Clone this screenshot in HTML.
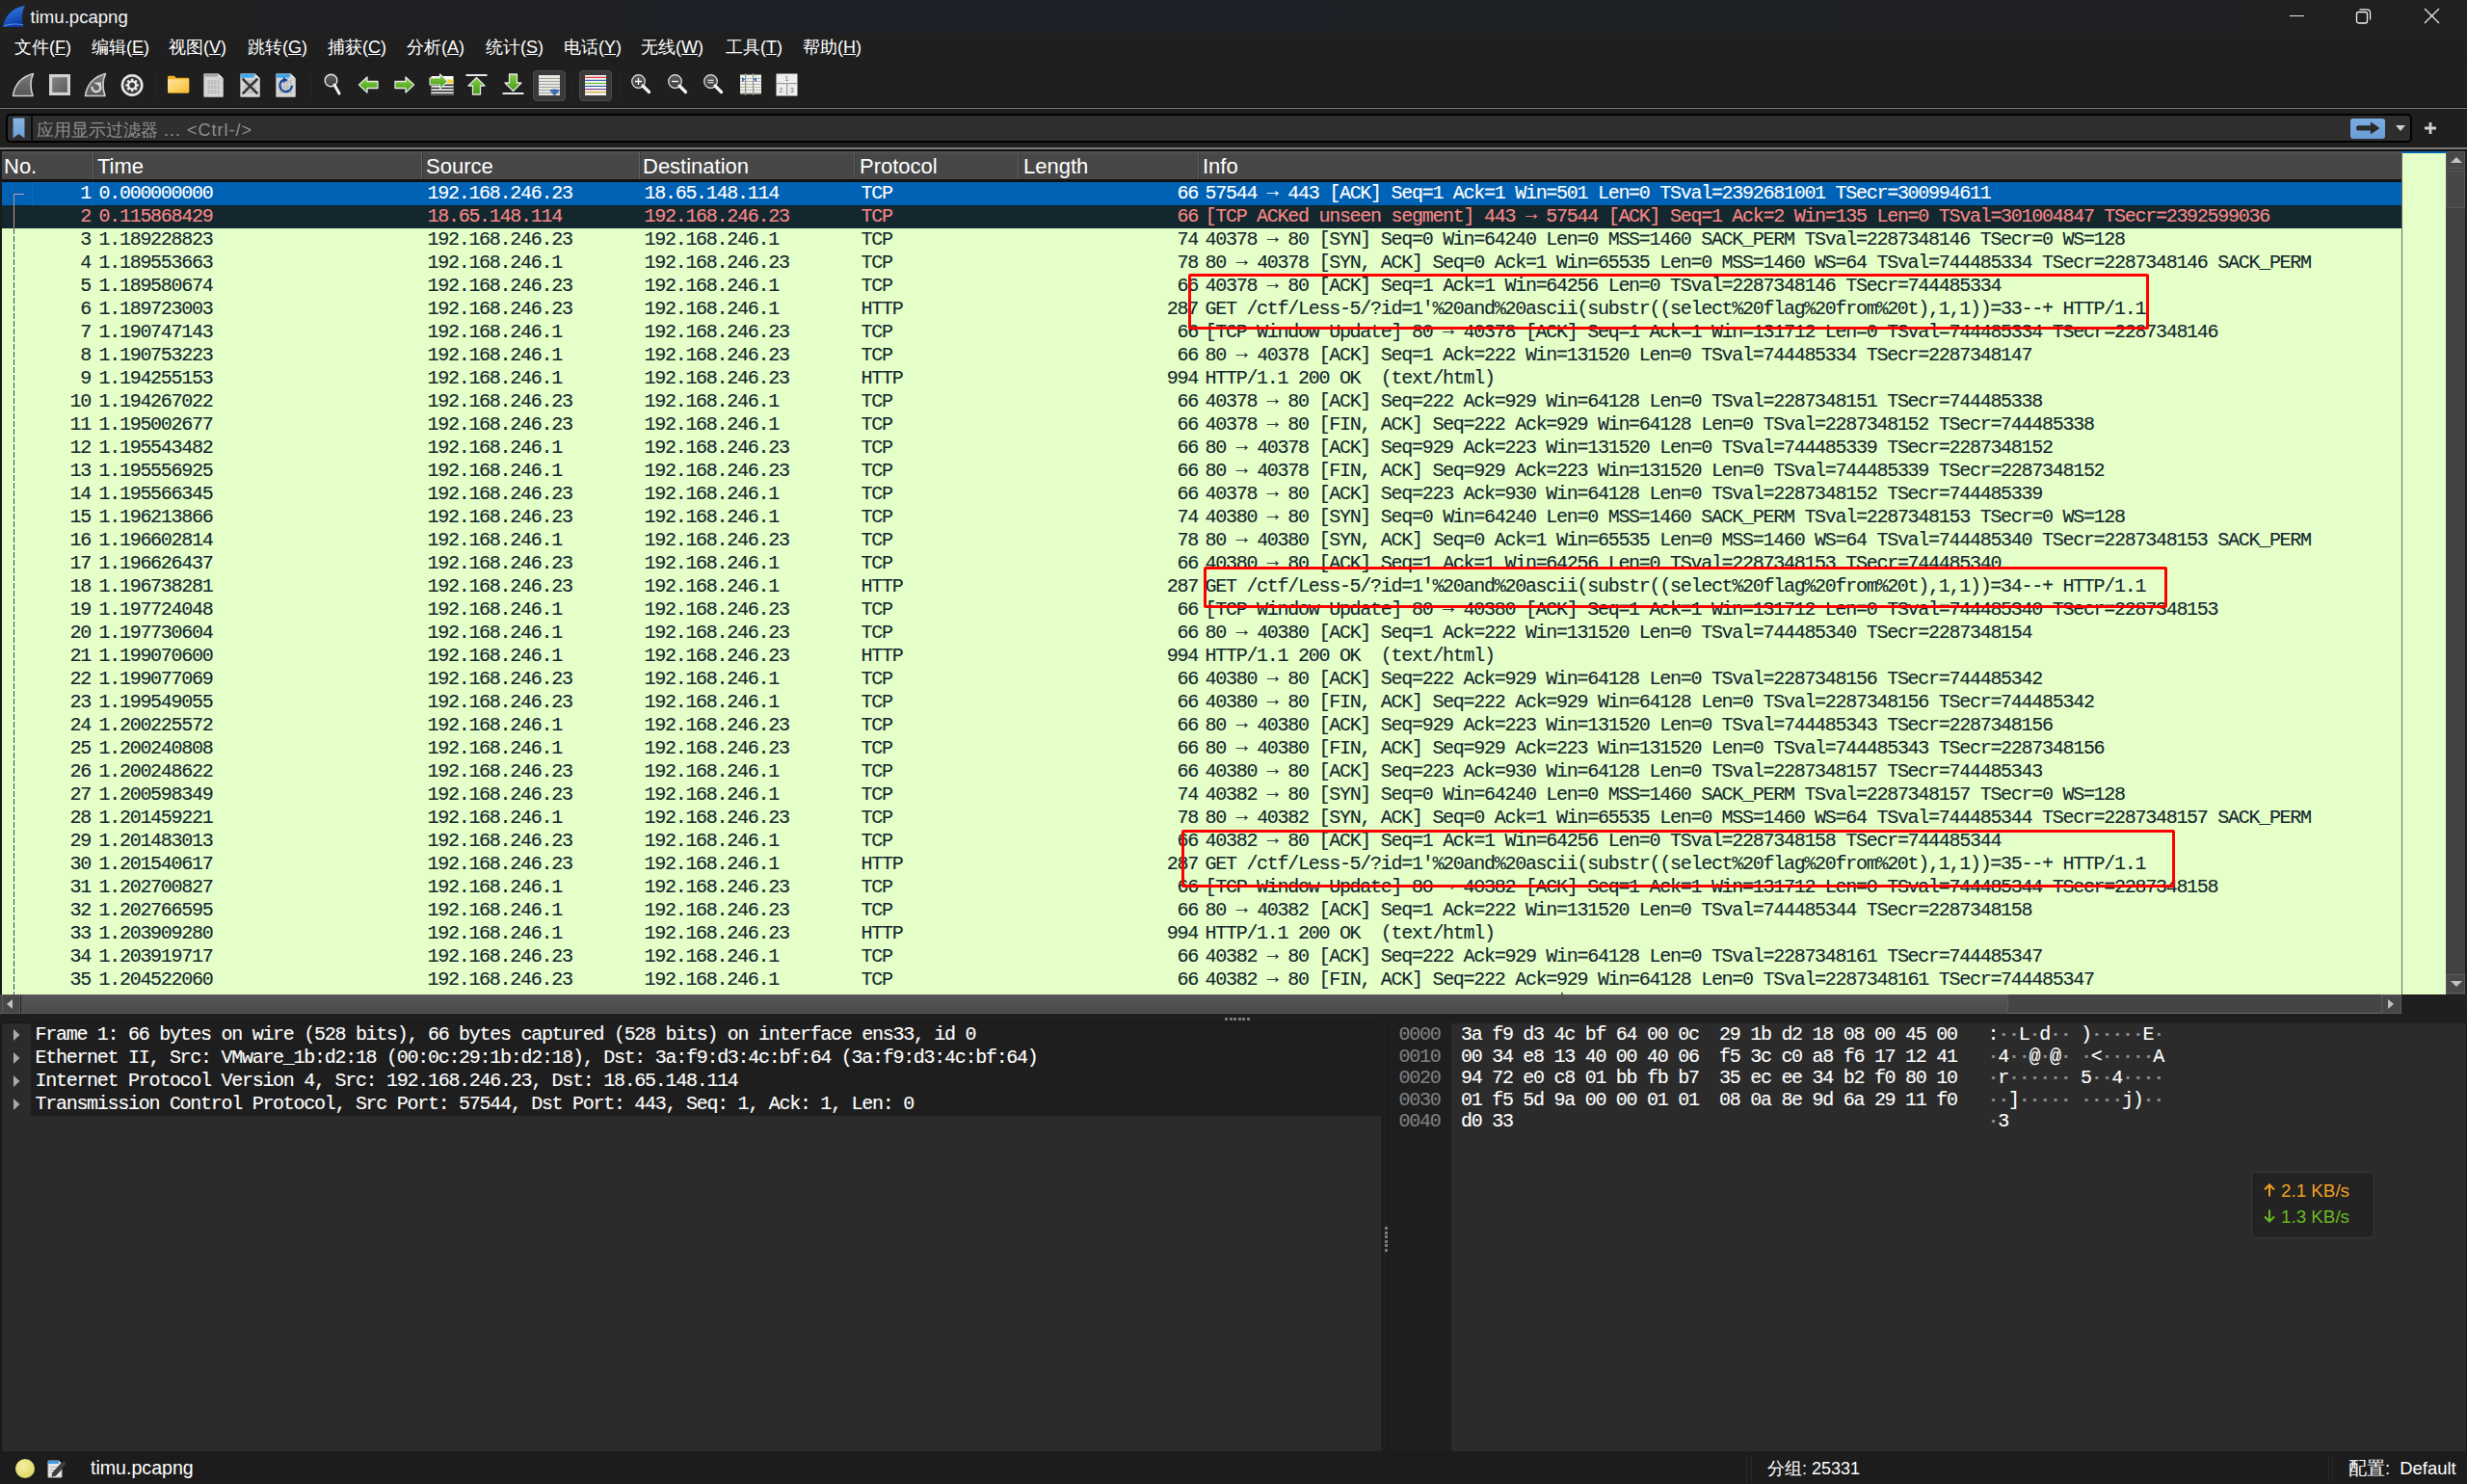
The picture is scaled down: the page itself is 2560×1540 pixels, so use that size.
<!DOCTYPE html><html><head><meta charset="utf-8"><style>
*{box-sizing:border-box;margin:0;padding:0}
html,body{width:2560px;height:1540px;overflow:hidden;background:#1f1f1f}
body{position:relative;font-family:"Liberation Sans",sans-serif;color:#fff}
.a{position:absolute}
.m{font-family:"Liberation Mono",monospace;font-size:20px;letter-spacing:-1.28px;-webkit-text-stroke:0.12px currentColor;white-space:pre;line-height:24px}
.s{font-family:"Liberation Sans",sans-serif;white-space:pre}
.row{position:absolute;left:2px;width:2490px;height:24px}
.row .m{position:absolute;top:0}
.hdr{position:absolute;top:157px;height:29px;background:linear-gradient(#525252,#474747 15%,#474747);}
.hs{position:absolute;top:157px;width:2px;height:29px;background:linear-gradient(90deg,#606060 50%,#3c3c3c 50%)}
.ht{position:absolute;top:160.5px;font-size:22px;line-height:24px;color:#fff}
.rb{position:absolute;border:3px solid #ff0000;border-radius:2px}
</style></head><body>
<div class="a" style="left:0;top:0;width:2560px;height:34px;background:linear-gradient(90deg,#212122 0%,#1f2023 15%,#1d2028 35%,#1e2126 55%,#1f2124 75%,#202022 100%)"></div>
<svg class="a" style="left:2px;top:5px" width="26" height="24" viewBox="0 0 26 24">
<defs><linearGradient id="sg" x1="0" y1="0" x2="0.4" y2="1"><stop offset="0" stop-color="#3a8af0"/><stop offset="1" stop-color="#0a3aa8"/></linearGradient></defs>
<path d="M1 23 C3 12 10 3 24 1 C21 6 20 14 22 23 Z" fill="url(#sg)"/>
<path d="M2 22 C8 19.5 16 19.5 22 21" stroke="#8fb8f0" stroke-width="1" fill="none" opacity=".7"/>
</svg>
<div class="a s" style="left:31.5px;top:6px;font-size:18.6px;line-height:24px;color:#f4f4f4">timu.pcapng</div>
<div class="a" style="left:2376px;top:16px;width:15px;height:1px;background:#e8e8e8"></div>
<svg class="a" style="left:2444px;top:8px" width="18" height="18" viewBox="0 0 18 18"><rect x="1.5" y="4.5" width="11" height="11.5" rx="2" fill="none" stroke="#f0f0f0" stroke-width="1.3"/><path d="M4.5 1.8 H12.5 a3 3 0 0 1 3 3 V12.5" fill="none" stroke="#f0f0f0" stroke-width="1.3"/></svg>
<svg class="a" style="left:2515px;top:8px" width="17" height="17" viewBox="0 0 17 17"><path d="M1 1 L16 16 M16 1 L1 16" stroke="#e8e8e8" stroke-width="1.3"/></svg>
<div class="a s" style="left:15px;top:36px;font-size:18px;line-height:26px;color:#fff">文件(<u>F</u>)</div>
<div class="a s" style="left:95px;top:36px;font-size:18px;line-height:26px;color:#fff">编辑(<u>E</u>)</div>
<div class="a s" style="left:175px;top:36px;font-size:18px;line-height:26px;color:#fff">视图(<u>V</u>)</div>
<div class="a s" style="left:257px;top:36px;font-size:18px;line-height:26px;color:#fff">跳转(<u>G</u>)</div>
<div class="a s" style="left:340px;top:36px;font-size:18px;line-height:26px;color:#fff">捕获(<u>C</u>)</div>
<div class="a s" style="left:422px;top:36px;font-size:18px;line-height:26px;color:#fff">分析(<u>A</u>)</div>
<div class="a s" style="left:504px;top:36px;font-size:18px;line-height:26px;color:#fff">统计(<u>S</u>)</div>
<div class="a s" style="left:585px;top:36px;font-size:18px;line-height:26px;color:#fff">电话(<u>Y</u>)</div>
<div class="a s" style="left:665px;top:36px;font-size:18px;line-height:26px;color:#fff">无线(<u>W</u>)</div>
<div class="a s" style="left:753px;top:36px;font-size:18px;line-height:26px;color:#fff">工具(<u>T</u>)</div>
<div class="a s" style="left:833px;top:36px;font-size:18px;line-height:26px;color:#fff">帮助(<u>H</u>)</div>
<div class="a" style="left:0;top:63px;width:2560px;height:1px;background:#1b1b1b"></div>
<svg width="0" height="0" style="position:absolute"><defs>
<linearGradient id="gfin" x1="0" y1="0" x2="0" y2="1"><stop offset="0" stop-color="#7a7a7a"/><stop offset="1" stop-color="#555"/></linearGradient>
<linearGradient id="gsq" x1="0" y1="0" x2="1" y2="1"><stop offset="0" stop-color="#5a5a5a"/><stop offset="1" stop-color="#707070"/></linearGradient>
<linearGradient id="ggr" x1="0" y1="0" x2="0" y2="1"><stop offset="0" stop-color="#8ad04a"/><stop offset="1" stop-color="#3e9a10"/></linearGradient>
<linearGradient id="gfold" x1="0" y1="0" x2="0" y2="1"><stop offset="0" stop-color="#ffe08a"/><stop offset="1" stop-color="#f8c440"/></linearGradient>
<linearGradient id="gmag" x1="0" y1="0" x2="0" y2="1"><stop offset="0" stop-color="#606060"/><stop offset="1" stop-color="#3a3a3a"/></linearGradient>
</defs></svg>
<svg class="a" style="left:12px;top:75px" width="24" height="26" viewBox="0 0 24 26"><path d="M1.5 24.5 C3 14 9 5 22.5 1.5 C19.5 8 19 16 22 24.5 Z" fill="url(#gfin)" stroke="#cfcfcf" stroke-width="1.6" stroke-linejoin="round"/></svg>
<svg class="a" style="left:51px;top:77px" width="22" height="22" viewBox="0 0 22 22"><defs><linearGradient id="gst" x1="0" y1="0" x2="1" y2="1"><stop offset="0" stop-color="#8a8a8a"/><stop offset="1" stop-color="#555"/></linearGradient></defs><rect x="1.6" y="1.6" width="18.8" height="18.8" fill="url(#gst)" stroke="#d2d2d2" stroke-width="3.2"/></svg>
<svg class="a" style="left:87px;top:75px" width="24" height="26" viewBox="0 0 24 26"><path d="M1.5 24.5 C3 14 9 5 22.5 1.5 C19.5 8 19 16 22 24.5 Z" fill="url(#gfin)" stroke="#cfcfcf" stroke-width="1.6" stroke-linejoin="round"/><path d="M8.6 14.8 A4.4 4.4 0 1 0 16.6 13.5 V10.8" fill="none" stroke="#d8d8d8" stroke-width="2.3"/><path d="M10 10.5 H18 V15.5Z" fill="#d8d8d8"/></svg>
<svg class="a" style="left:125px;top:76px" width="25" height="25" viewBox="0 0 25 25"><circle cx="12.1" cy="12.4" r="10.2" fill="#3a3a3a" stroke="#e6e6e6" stroke-width="2.6"/><rect x="10.9" y="5.7" width="2.4" height="2.4" fill="#ececec" transform="rotate(0 12.1 12.4)"/><rect x="10.9" y="5.7" width="2.4" height="2.4" fill="#ececec" transform="rotate(45 12.1 12.4)"/><rect x="10.9" y="5.7" width="2.4" height="2.4" fill="#ececec" transform="rotate(90 12.1 12.4)"/><rect x="10.9" y="5.7" width="2.4" height="2.4" fill="#ececec" transform="rotate(135 12.1 12.4)"/><rect x="10.9" y="5.7" width="2.4" height="2.4" fill="#ececec" transform="rotate(180 12.1 12.4)"/><rect x="10.9" y="5.7" width="2.4" height="2.4" fill="#ececec" transform="rotate(225 12.1 12.4)"/><rect x="10.9" y="5.7" width="2.4" height="2.4" fill="#ececec" transform="rotate(270 12.1 12.4)"/><rect x="10.9" y="5.7" width="2.4" height="2.4" fill="#ececec" transform="rotate(315 12.1 12.4)"/><circle cx="12.1" cy="12.4" r="5" fill="#ececec"/><circle cx="12.1" cy="12.4" r="2.8" fill="#3a3a3a"/></svg>
<div class="a" style="left:161px;top:77px;width:1px;height:24px;background:#262626"></div>
<div class="a" style="left:322px;top:77px;width:1px;height:24px;background:#262626"></div>
<div class="a" style="left:594px;top:77px;width:1px;height:24px;background:#262626"></div>
<div class="a" style="left:642px;top:77px;width:1px;height:24px;background:#262626"></div>
<svg class="a" style="left:173px;top:78px" width="24" height="19" viewBox="0 0 24 19"><defs><linearGradient id="gfo2" x1="0" y1="0" x2="1" y2="1"><stop offset="0" stop-color="#ffe6a0"/><stop offset="1" stop-color="#f8be30"/></linearGradient></defs><path d="M1 2 a1.2 1.2 0 0 1 1.2 -1.2 h5.8 l1.8 2 h12.2 a1.2 1.2 0 0 1 1.2 1.2 v13.6 a1.2 1.2 0 0 1 -1.2 1.2 h-19.8 a1.2 1.2 0 0 1 -1.2 -1.2z" fill="#f0b020"/><path d="M1 4.2 h22.2 v12.4 a1.2 1.2 0 0 1 -1.2 1.2 h-19.8 a1.2 1.2 0 0 1 -1.2 -1.2z" fill="url(#gfo2)"/></svg>
<svg class="a" style="left:211px;top:76px" width="21" height="25" viewBox="0 0 21 25"><path d="M0.8 0.8 h15 l4.5 4.5 v19 h-19.5z" fill="#d7d7d7" stroke="#bdbdbd" stroke-width="1"/><path d="M15.8 0.8 v4.5 h4.5" fill="#f0f0f0" stroke="#bdbdbd" stroke-width="1"/><text x="4" y="11" font-family="Liberation Mono" font-size="5.5" fill="#9a9a9a">0101</text><text x="4" y="16" font-family="Liberation Mono" font-size="5.5" fill="#9a9a9a">0101</text><text x="4" y="21" font-family="Liberation Mono" font-size="5.5" fill="#9a9a9a">0101</text><path d="M0.8 0.8 h15 l-2 3 h-13z" fill="#a8a8a8"/></svg>
<svg class="a" style="left:249px;top:76px" width="21" height="25" viewBox="0 0 21 25"><path d="M0.8 0.8 h15 l4.5 4.5 v19 h-19.5z" fill="#d7d7d7" stroke="#bdbdbd" stroke-width="1"/><path d="M15.8 0.8 v4.5 h4.5" fill="#f0f0f0" stroke="#bdbdbd" stroke-width="1"/><text x="4" y="11" font-family="Liberation Mono" font-size="5.5" fill="#9a9a9a">0101</text><text x="4" y="16" font-family="Liberation Mono" font-size="5.5" fill="#9a9a9a">0101</text><text x="4" y="21" font-family="Liberation Mono" font-size="5.5" fill="#9a9a9a">0101</text><path d="M0.8 0.8 h15 l-2 4 h-13z" fill="#40a8e8"/><path d="M3.5 6.5 L17.5 20.5 M17.5 6.5 L3.5 20.5" stroke="#303438" stroke-width="2.6" stroke-linecap="round"/></svg>
<svg class="a" style="left:286px;top:76px" width="21" height="25" viewBox="0 0 21 25"><path d="M0.8 0.8 h15 l4.5 4.5 v19 h-19.5z" fill="#d7d7d7" stroke="#bdbdbd" stroke-width="1"/><path d="M15.8 0.8 v4.5 h4.5" fill="#f0f0f0" stroke="#bdbdbd" stroke-width="1"/><text x="4" y="11" font-family="Liberation Mono" font-size="5.5" fill="#9a9a9a">0101</text><text x="4" y="16" font-family="Liberation Mono" font-size="5.5" fill="#9a9a9a">0101</text><text x="4" y="21" font-family="Liberation Mono" font-size="5.5" fill="#9a9a9a">0101</text><path d="M0.8 0.8 h15 l-2 4 h-13z" fill="#40a8e8"/><path d="M8.5 6.8 a6.3 6.3 0 1 0 8.5 6" fill="none" stroke="#1a4a9a" stroke-width="2.4"/><path d="M8 4 l5 3 l-5 3z" fill="#1a4a9a"/></svg>
<svg class="a" style="left:336px;top:76px" width="18" height="24" viewBox="0 0 18 24"><circle cx="7.5" cy="7.5" r="6.3" fill="url(#gmag)" stroke="#e8e8e8" stroke-width="1.4"/><path d="M11 12 L16 21" stroke="#f0f0f0" stroke-width="3" stroke-linecap="round"/></svg>
<svg class="a" style="left:371px;top:79px" width="23" height="19" viewBox="0 0 23 19"><path d="M1.5 9 L10 1 V5.5 H21 V12.5 H10 V17 Z" fill="url(#ggr)" stroke="#e8e8e8" stroke-width="1.3" stroke-linejoin="round"/></svg>
<svg class="a" style="left:408px;top:79px" width="23" height="19" viewBox="0 0 23 19"><g transform="translate(23 0) scale(-1 1)"><path d="M1.5 9 L10 1 V5.5 H21 V12.5 H10 V17 Z" fill="url(#ggr)" stroke="#e8e8e8" stroke-width="1.3" stroke-linejoin="round"/></g></svg>
<svg class="a" style="left:445px;top:76px" width="26" height="24" viewBox="0 0 26 24"><rect x="2.5" y="3" width="23" height="20" fill="#fff"/><rect x="2.5" y="11.5" width="23" height="1.6" fill="#2a2a2a"/><rect x="2.5" y="14.7" width="23" height="1.6" fill="#2a2a2a"/><rect x="2.5" y="17.9" width="23" height="1.6" fill="#2a2a2a"/><rect x="2.5" y="21.1" width="23" height="1.6" fill="#2a2a2a"/><rect x="19" y="6.5" width="6.5" height="4" fill="#f0d040"/><path d="M19.5 8.5 L11.5 0.8 V5 H1 V12 H11.5 V16.2Z" fill="url(#ggr)" stroke="#e8e8e8" stroke-width="1.1" stroke-linejoin="round"/></svg>
<svg class="a" style="left:483px;top:76px" width="23" height="23" viewBox="0 0 23 23"><rect x="0.5" y="1" width="22" height="2" fill="#e8e8e8"/><path d="M11.5 4.5 L20 13 H15.5 V22 H7.5 V13 H3Z" fill="url(#ggr)" stroke="#e8e8e8" stroke-width="1.3" stroke-linejoin="round"/></svg>
<svg class="a" style="left:521px;top:76px" width="23" height="23" viewBox="0 0 23 23"><rect x="0.5" y="20" width="22" height="2" fill="#e8e8e8"/><path d="M11.5 18.5 L20 10 H15.5 V1 H7.5 V10 H3Z" fill="url(#ggr)" stroke="#e8e8e8" stroke-width="1.3" stroke-linejoin="round"/></svg>
<div class="a" style="left:553px;top:73px;width:34px;height:32px;background:#3a3a3a;border:1.5px solid #4c4c4c;border-radius:4px"></div>
<svg class="a" style="left:558px;top:77px" width="24" height="23" viewBox="0 0 24 23"><rect x="1" y="1" width="22" height="21" fill="#e8e8e0"/><rect x="1" y="4" width="22" height="1" fill="#a0a0a0"/><rect x="1" y="7" width="22" height="1" fill="#a0a0a0"/><rect x="1" y="10" width="22" height="1" fill="#a0a0a0"/><rect x="1" y="13" width="22" height="1" fill="#a0a0a0"/><rect x="1" y="16" width="22" height="1" fill="#a0a0a0"/><rect x="1" y="19" width="22" height="1" fill="#a0a0a0"/><path d="M12 16.5 Q17.5 14.5 23 16.5 L17.5 22.5z" fill="#3a6cb8"/></svg>
<div class="a" style="left:601px;top:73px;width:34px;height:32px;background:#3a3a3a;border:1.5px solid #4c4c4c;border-radius:4px"></div>
<svg class="a" style="left:606px;top:77px" width="24" height="23" viewBox="0 0 24 23"><rect x="1" y="1" width="22" height="21" fill="#f4f4f4"/><rect x="1" y="2.8" width="22" height="1.1" fill="#e82020"/><rect x="1" y="5.8" width="22" height="1.1" fill="#2a5eb0"/><rect x="1" y="8.9" width="22" height="1.1" fill="#60c020"/><rect x="1" y="11.9" width="22" height="1.1" fill="#2a5eb0"/><rect x="1" y="15.0" width="22" height="1.1" fill="#7a3a8a"/><rect x="1" y="18.1" width="22" height="1.1" fill="#d0a010"/></svg>
<svg class="a" style="left:655px;top:77px" width="22" height="22" viewBox="0 0 22 22"><circle cx="7.5" cy="7.5" r="6.8" fill="url(#gmag)" stroke="#e8e8e8" stroke-width="1.2"/><path d="M12 12 L18.5 18.5" stroke="#f4f4f4" stroke-width="3.2" stroke-linecap="round"/><path d="M7.5 4 V11 M4 7.5 H11" stroke="#fff" stroke-width="1.3"/></svg>
<svg class="a" style="left:693px;top:77px" width="22" height="22" viewBox="0 0 22 22"><circle cx="7.5" cy="7.5" r="6.8" fill="url(#gmag)" stroke="#e8e8e8" stroke-width="1.2"/><path d="M12 12 L18.5 18.5" stroke="#f4f4f4" stroke-width="3.2" stroke-linecap="round"/><path d="M4 7.5 H11" stroke="#fff" stroke-width="1.3"/></svg>
<svg class="a" style="left:730px;top:77px" width="22" height="22" viewBox="0 0 22 22"><circle cx="7.5" cy="7.5" r="6.8" fill="url(#gmag)" stroke="#e8e8e8" stroke-width="1.2"/><path d="M12 12 L18.5 18.5" stroke="#f4f4f4" stroke-width="3.2" stroke-linecap="round"/><path d="M4.5 6.3 H10.5 M4.5 8.7 H10.5" stroke="#fff" stroke-width="1.1"/></svg>
<svg class="a" style="left:767px;top:76px" width="23" height="24" viewBox="0 0 23 24"><rect x="1" y="1.5" width="22" height="20" fill="#f0f0ea"/><rect x="1" y="5" width="22" height="1" fill="#b8b8b0"/><rect x="1" y="8" width="22" height="1" fill="#b8b8b0"/><rect x="1" y="11" width="22" height="1" fill="#b8b8b0"/><rect x="1" y="14" width="22" height="1" fill="#b8b8b0"/><rect x="1" y="17" width="22" height="1" fill="#b8b8b0"/><rect x="1" y="20" width="22" height="1" fill="#b8b8b0"/><rect x="6" y="0" width="1.2" height="23" fill="#909090"/><rect x="14" y="0" width="1.2" height="23" fill="#909090"/><path d="M3 4 L6 6.5 L3 9z M18 4 L15 6.5 L18 9z" fill="#3070c0"/></svg>
<svg class="a" style="left:805px;top:76px" width="23" height="24" viewBox="0 0 23 24"><rect x="0.5" y="0.5" width="22" height="23" fill="#eeeeee"/><rect x="0.5" y="10" width="22" height="1.2" fill="#9a9a9a"/><rect x="11" y="10" width="1.2" height="14" fill="#9a9a9a"/><text x="9.5" y="8" font-family="Liberation Sans" font-size="6.5" fill="#666">1</text><text x="3.5" y="20" font-family="Liberation Sans" font-size="6.5" fill="#666">2</text><text x="15" y="20" font-family="Liberation Sans" font-size="6.5" fill="#666">3</text></svg>
<div class="a" style="left:0;top:110px;width:2560px;height:2px;background:#1a1a1a"></div>
<div class="a" style="left:0;top:112px;width:2560px;height:1px;background:#7a7a7a"></div>
<div class="a" style="left:6px;top:118px;width:2497px;height:30px;background:#2e2e2e;border:2px solid #000;border-radius:5px"></div>
<div class="a" style="left:32px;top:119px;width:2px;height:28px;background:#0d0d0d"></div>
<svg class="a" style="left:13px;top:122px" width="13" height="22" viewBox="0 0 13 22"><defs><linearGradient id="gbm" x1="0" y1="0" x2="0" y2="1"><stop offset="0" stop-color="#8ab4e0"/><stop offset="1" stop-color="#6a9ed8"/></linearGradient></defs><path d="M0.5 0.5 H12.5 V21.5 L6.5 17 L0.5 21.5Z" fill="url(#gbm)"/></svg>
<div class="a s" style="left:38px;top:123px;font-size:18px;line-height:24px;color:#8f8f8f">应用显示过滤器<span style="letter-spacing:1px"> ... &lt;Ctrl-/&gt;</span></div>
<div class="a" style="left:2439px;top:123px;width:36px;height:21px;background:linear-gradient(#7aaee4,#6a9cd6);border-radius:3px"></div>
<svg class="a" style="left:2444px;top:126px" width="26" height="15" viewBox="0 0 26 15"><rect x="1" y="4.2" width="17" height="5.4" rx="2.6" fill="#2a2a2a"/><path d="M16.3 1.2 L24.8 6.9 L16.3 12.7z" fill="#2a2a2a" stroke="#2a2a2a" stroke-width="1" stroke-linejoin="round"/></svg>
<svg class="a" style="left:2486px;top:130px" width="10" height="6" viewBox="0 0 10 6"><path d="M0 0 H10 L5 6z" fill="#d0d0d0"/></svg>
<svg class="a" style="left:2515px;top:126px" width="14" height="14" viewBox="0 0 14 14"><path d="M7 1 V13 M1 7 H13" stroke="#cfcfcf" stroke-width="2.8"/></svg>
<div class="a" style="left:0;top:153px;width:2560px;height:2px;background:#7a7a7a"></div>
<div class="a" style="left:0;top:155px;width:2560px;height:2px;background:#141414"></div>
<div class="a" style="left:0;top:157px;width:2px;height:895px;background:#1a1a1a"></div>
<div class="hdr" style="left:2px;width:2490px"></div>
<div class="hs" style="left:96px"></div>
<div class="hs" style="left:437px"></div>
<div class="hs" style="left:663px"></div>
<div class="hs" style="left:886px"></div>
<div class="hs" style="left:1056px"></div>
<div class="hs" style="left:1243px"></div>
<div class="ht s" style="left:4px">No.</div>
<div class="ht s" style="left:101px">Time</div>
<div class="ht s" style="left:442px">Source</div>
<div class="ht s" style="left:667px">Destination</div>
<div class="ht s" style="left:892px">Protocol</div>
<div class="ht s" style="left:1062px">Length</div>
<div class="ht s" style="left:1248px">Info</div>
<div class="a" style="left:2px;top:186px;width:2490px;height:3px;background:#121212"></div>
<div class="a" style="left:2px;top:189px;width:2490px;height:843px;overflow:hidden;background:#e4ffc7">
<div class="a" style="left:-2px;top:-189px;width:2492px;height:1540px">
<div class="row" style="top:188.8px;background:#0062b5;color:#ffffff"><div class="m" style="right:2398px;text-align:right">1</div><div class="m" style="left:100.5px">0.000000000</div><div class="m" style="left:441.5px">192.168.246.23</div><div class="m" style="left:666.5px">18.65.148.114</div><div class="m" style="left:891.5px">TCP</div><div class="m" style="right:1249px;text-align:right">66</div><div class="m" style="left:1248.5px">57544 <span style="position:relative;top:-2px">→</span> 443 [ACK] Seq=1 Ack=1 Win=501 Len=0 TSval=2392681001 TSecr=300994611</div></div>
<div class="row" style="top:212.8px;background:#12272e;color:#f78787"><div class="m" style="right:2398px;text-align:right">2</div><div class="m" style="left:100.5px">0.115868429</div><div class="m" style="left:441.5px">18.65.148.114</div><div class="m" style="left:666.5px">192.168.246.23</div><div class="m" style="left:891.5px">TCP</div><div class="m" style="right:1249px;text-align:right">66</div><div class="m" style="left:1248.5px">[TCP ACKed unseen segment] 443 <span style="position:relative;top:-2px">→</span> 57544 [ACK] Seq=1 Ack=2 Win=135 Len=0 TSval=301004847 TSecr=2392599036</div></div>
<div class="row" style="top:236.8px;background:#e4ffc7;color:#12272e"><div class="m" style="right:2398px;text-align:right">3</div><div class="m" style="left:100.5px">1.189228823</div><div class="m" style="left:441.5px">192.168.246.23</div><div class="m" style="left:666.5px">192.168.246.1</div><div class="m" style="left:891.5px">TCP</div><div class="m" style="right:1249px;text-align:right">74</div><div class="m" style="left:1248.5px">40378 <span style="position:relative;top:-2px">→</span> 80 [SYN] Seq=0 Win=64240 Len=0 MSS=1460 SACK_PERM TSval=2287348146 TSecr=0 WS=128</div></div>
<div class="row" style="top:260.8px;background:#e4ffc7;color:#12272e"><div class="m" style="right:2398px;text-align:right">4</div><div class="m" style="left:100.5px">1.189553663</div><div class="m" style="left:441.5px">192.168.246.1</div><div class="m" style="left:666.5px">192.168.246.23</div><div class="m" style="left:891.5px">TCP</div><div class="m" style="right:1249px;text-align:right">78</div><div class="m" style="left:1248.5px">80 <span style="position:relative;top:-2px">→</span> 40378 [SYN, ACK] Seq=0 Ack=1 Win=65535 Len=0 MSS=1460 WS=64 TSval=744485334 TSecr=2287348146 SACK_PERM</div></div>
<div class="row" style="top:284.8px;background:#e4ffc7;color:#12272e"><div class="m" style="right:2398px;text-align:right">5</div><div class="m" style="left:100.5px">1.189580674</div><div class="m" style="left:441.5px">192.168.246.23</div><div class="m" style="left:666.5px">192.168.246.1</div><div class="m" style="left:891.5px">TCP</div><div class="m" style="right:1249px;text-align:right">66</div><div class="m" style="left:1248.5px">40378 <span style="position:relative;top:-2px">→</span> 80 [ACK] Seq=1 Ack=1 Win=64256 Len=0 TSval=2287348146 TSecr=744485334</div></div>
<div class="row" style="top:308.8px;background:#e4ffc7;color:#12272e"><div class="m" style="right:2398px;text-align:right">6</div><div class="m" style="left:100.5px">1.189723003</div><div class="m" style="left:441.5px">192.168.246.23</div><div class="m" style="left:666.5px">192.168.246.1</div><div class="m" style="left:891.5px">HTTP</div><div class="m" style="right:1249px;text-align:right">287</div><div class="m" style="left:1248.5px">GET /ctf/Less-5/?id=1&#x27;%20and%20ascii(substr((select%20flag%20from%20t),1,1))=33--+ HTTP/1.1</div></div>
<div class="row" style="top:332.8px;background:#e4ffc7;color:#12272e"><div class="m" style="right:2398px;text-align:right">7</div><div class="m" style="left:100.5px">1.190747143</div><div class="m" style="left:441.5px">192.168.246.1</div><div class="m" style="left:666.5px">192.168.246.23</div><div class="m" style="left:891.5px">TCP</div><div class="m" style="right:1249px;text-align:right">66</div><div class="m" style="left:1248.5px">[TCP Window Update] 80 <span style="position:relative;top:-2px">→</span> 40378 [ACK] Seq=1 Ack=1 Win=131712 Len=0 TSval=744485334 TSecr=2287348146</div></div>
<div class="row" style="top:356.8px;background:#e4ffc7;color:#12272e"><div class="m" style="right:2398px;text-align:right">8</div><div class="m" style="left:100.5px">1.190753223</div><div class="m" style="left:441.5px">192.168.246.1</div><div class="m" style="left:666.5px">192.168.246.23</div><div class="m" style="left:891.5px">TCP</div><div class="m" style="right:1249px;text-align:right">66</div><div class="m" style="left:1248.5px">80 <span style="position:relative;top:-2px">→</span> 40378 [ACK] Seq=1 Ack=222 Win=131520 Len=0 TSval=744485334 TSecr=2287348147</div></div>
<div class="row" style="top:380.8px;background:#e4ffc7;color:#12272e"><div class="m" style="right:2398px;text-align:right">9</div><div class="m" style="left:100.5px">1.194255153</div><div class="m" style="left:441.5px">192.168.246.1</div><div class="m" style="left:666.5px">192.168.246.23</div><div class="m" style="left:891.5px">HTTP</div><div class="m" style="right:1249px;text-align:right">994</div><div class="m" style="left:1248.5px">HTTP/1.1 200 OK  (text/html)</div></div>
<div class="row" style="top:404.8px;background:#e4ffc7;color:#12272e"><div class="m" style="right:2398px;text-align:right">10</div><div class="m" style="left:100.5px">1.194267022</div><div class="m" style="left:441.5px">192.168.246.23</div><div class="m" style="left:666.5px">192.168.246.1</div><div class="m" style="left:891.5px">TCP</div><div class="m" style="right:1249px;text-align:right">66</div><div class="m" style="left:1248.5px">40378 <span style="position:relative;top:-2px">→</span> 80 [ACK] Seq=222 Ack=929 Win=64128 Len=0 TSval=2287348151 TSecr=744485338</div></div>
<div class="row" style="top:428.8px;background:#e4ffc7;color:#12272e"><div class="m" style="right:2398px;text-align:right">11</div><div class="m" style="left:100.5px">1.195002677</div><div class="m" style="left:441.5px">192.168.246.23</div><div class="m" style="left:666.5px">192.168.246.1</div><div class="m" style="left:891.5px">TCP</div><div class="m" style="right:1249px;text-align:right">66</div><div class="m" style="left:1248.5px">40378 <span style="position:relative;top:-2px">→</span> 80 [FIN, ACK] Seq=222 Ack=929 Win=64128 Len=0 TSval=2287348152 TSecr=744485338</div></div>
<div class="row" style="top:452.8px;background:#e4ffc7;color:#12272e"><div class="m" style="right:2398px;text-align:right">12</div><div class="m" style="left:100.5px">1.195543482</div><div class="m" style="left:441.5px">192.168.246.1</div><div class="m" style="left:666.5px">192.168.246.23</div><div class="m" style="left:891.5px">TCP</div><div class="m" style="right:1249px;text-align:right">66</div><div class="m" style="left:1248.5px">80 <span style="position:relative;top:-2px">→</span> 40378 [ACK] Seq=929 Ack=223 Win=131520 Len=0 TSval=744485339 TSecr=2287348152</div></div>
<div class="row" style="top:476.8px;background:#e4ffc7;color:#12272e"><div class="m" style="right:2398px;text-align:right">13</div><div class="m" style="left:100.5px">1.195556925</div><div class="m" style="left:441.5px">192.168.246.1</div><div class="m" style="left:666.5px">192.168.246.23</div><div class="m" style="left:891.5px">TCP</div><div class="m" style="right:1249px;text-align:right">66</div><div class="m" style="left:1248.5px">80 <span style="position:relative;top:-2px">→</span> 40378 [FIN, ACK] Seq=929 Ack=223 Win=131520 Len=0 TSval=744485339 TSecr=2287348152</div></div>
<div class="row" style="top:500.8px;background:#e4ffc7;color:#12272e"><div class="m" style="right:2398px;text-align:right">14</div><div class="m" style="left:100.5px">1.195566345</div><div class="m" style="left:441.5px">192.168.246.23</div><div class="m" style="left:666.5px">192.168.246.1</div><div class="m" style="left:891.5px">TCP</div><div class="m" style="right:1249px;text-align:right">66</div><div class="m" style="left:1248.5px">40378 <span style="position:relative;top:-2px">→</span> 80 [ACK] Seq=223 Ack=930 Win=64128 Len=0 TSval=2287348152 TSecr=744485339</div></div>
<div class="row" style="top:524.8px;background:#e4ffc7;color:#12272e"><div class="m" style="right:2398px;text-align:right">15</div><div class="m" style="left:100.5px">1.196213866</div><div class="m" style="left:441.5px">192.168.246.23</div><div class="m" style="left:666.5px">192.168.246.1</div><div class="m" style="left:891.5px">TCP</div><div class="m" style="right:1249px;text-align:right">74</div><div class="m" style="left:1248.5px">40380 <span style="position:relative;top:-2px">→</span> 80 [SYN] Seq=0 Win=64240 Len=0 MSS=1460 SACK_PERM TSval=2287348153 TSecr=0 WS=128</div></div>
<div class="row" style="top:548.8px;background:#e4ffc7;color:#12272e"><div class="m" style="right:2398px;text-align:right">16</div><div class="m" style="left:100.5px">1.196602814</div><div class="m" style="left:441.5px">192.168.246.1</div><div class="m" style="left:666.5px">192.168.246.23</div><div class="m" style="left:891.5px">TCP</div><div class="m" style="right:1249px;text-align:right">78</div><div class="m" style="left:1248.5px">80 <span style="position:relative;top:-2px">→</span> 40380 [SYN, ACK] Seq=0 Ack=1 Win=65535 Len=0 MSS=1460 WS=64 TSval=744485340 TSecr=2287348153 SACK_PERM</div></div>
<div class="row" style="top:572.8px;background:#e4ffc7;color:#12272e"><div class="m" style="right:2398px;text-align:right">17</div><div class="m" style="left:100.5px">1.196626437</div><div class="m" style="left:441.5px">192.168.246.23</div><div class="m" style="left:666.5px">192.168.246.1</div><div class="m" style="left:891.5px">TCP</div><div class="m" style="right:1249px;text-align:right">66</div><div class="m" style="left:1248.5px">40380 <span style="position:relative;top:-2px">→</span> 80 [ACK] Seq=1 Ack=1 Win=64256 Len=0 TSval=2287348153 TSecr=744485340</div></div>
<div class="row" style="top:596.8px;background:#e4ffc7;color:#12272e"><div class="m" style="right:2398px;text-align:right">18</div><div class="m" style="left:100.5px">1.196738281</div><div class="m" style="left:441.5px">192.168.246.23</div><div class="m" style="left:666.5px">192.168.246.1</div><div class="m" style="left:891.5px">HTTP</div><div class="m" style="right:1249px;text-align:right">287</div><div class="m" style="left:1248.5px">GET /ctf/Less-5/?id=1&#x27;%20and%20ascii(substr((select%20flag%20from%20t),1,1))=34--+ HTTP/1.1</div></div>
<div class="row" style="top:620.8px;background:#e4ffc7;color:#12272e"><div class="m" style="right:2398px;text-align:right">19</div><div class="m" style="left:100.5px">1.197724048</div><div class="m" style="left:441.5px">192.168.246.1</div><div class="m" style="left:666.5px">192.168.246.23</div><div class="m" style="left:891.5px">TCP</div><div class="m" style="right:1249px;text-align:right">66</div><div class="m" style="left:1248.5px">[TCP Window Update] 80 <span style="position:relative;top:-2px">→</span> 40380 [ACK] Seq=1 Ack=1 Win=131712 Len=0 TSval=744485340 TSecr=2287348153</div></div>
<div class="row" style="top:644.8px;background:#e4ffc7;color:#12272e"><div class="m" style="right:2398px;text-align:right">20</div><div class="m" style="left:100.5px">1.197730604</div><div class="m" style="left:441.5px">192.168.246.1</div><div class="m" style="left:666.5px">192.168.246.23</div><div class="m" style="left:891.5px">TCP</div><div class="m" style="right:1249px;text-align:right">66</div><div class="m" style="left:1248.5px">80 <span style="position:relative;top:-2px">→</span> 40380 [ACK] Seq=1 Ack=222 Win=131520 Len=0 TSval=744485340 TSecr=2287348154</div></div>
<div class="row" style="top:668.8px;background:#e4ffc7;color:#12272e"><div class="m" style="right:2398px;text-align:right">21</div><div class="m" style="left:100.5px">1.199070600</div><div class="m" style="left:441.5px">192.168.246.1</div><div class="m" style="left:666.5px">192.168.246.23</div><div class="m" style="left:891.5px">HTTP</div><div class="m" style="right:1249px;text-align:right">994</div><div class="m" style="left:1248.5px">HTTP/1.1 200 OK  (text/html)</div></div>
<div class="row" style="top:692.8px;background:#e4ffc7;color:#12272e"><div class="m" style="right:2398px;text-align:right">22</div><div class="m" style="left:100.5px">1.199077069</div><div class="m" style="left:441.5px">192.168.246.23</div><div class="m" style="left:666.5px">192.168.246.1</div><div class="m" style="left:891.5px">TCP</div><div class="m" style="right:1249px;text-align:right">66</div><div class="m" style="left:1248.5px">40380 <span style="position:relative;top:-2px">→</span> 80 [ACK] Seq=222 Ack=929 Win=64128 Len=0 TSval=2287348156 TSecr=744485342</div></div>
<div class="row" style="top:716.8px;background:#e4ffc7;color:#12272e"><div class="m" style="right:2398px;text-align:right">23</div><div class="m" style="left:100.5px">1.199549055</div><div class="m" style="left:441.5px">192.168.246.23</div><div class="m" style="left:666.5px">192.168.246.1</div><div class="m" style="left:891.5px">TCP</div><div class="m" style="right:1249px;text-align:right">66</div><div class="m" style="left:1248.5px">40380 <span style="position:relative;top:-2px">→</span> 80 [FIN, ACK] Seq=222 Ack=929 Win=64128 Len=0 TSval=2287348156 TSecr=744485342</div></div>
<div class="row" style="top:740.8px;background:#e4ffc7;color:#12272e"><div class="m" style="right:2398px;text-align:right">24</div><div class="m" style="left:100.5px">1.200225572</div><div class="m" style="left:441.5px">192.168.246.1</div><div class="m" style="left:666.5px">192.168.246.23</div><div class="m" style="left:891.5px">TCP</div><div class="m" style="right:1249px;text-align:right">66</div><div class="m" style="left:1248.5px">80 <span style="position:relative;top:-2px">→</span> 40380 [ACK] Seq=929 Ack=223 Win=131520 Len=0 TSval=744485343 TSecr=2287348156</div></div>
<div class="row" style="top:764.8px;background:#e4ffc7;color:#12272e"><div class="m" style="right:2398px;text-align:right">25</div><div class="m" style="left:100.5px">1.200240808</div><div class="m" style="left:441.5px">192.168.246.1</div><div class="m" style="left:666.5px">192.168.246.23</div><div class="m" style="left:891.5px">TCP</div><div class="m" style="right:1249px;text-align:right">66</div><div class="m" style="left:1248.5px">80 <span style="position:relative;top:-2px">→</span> 40380 [FIN, ACK] Seq=929 Ack=223 Win=131520 Len=0 TSval=744485343 TSecr=2287348156</div></div>
<div class="row" style="top:788.8px;background:#e4ffc7;color:#12272e"><div class="m" style="right:2398px;text-align:right">26</div><div class="m" style="left:100.5px">1.200248622</div><div class="m" style="left:441.5px">192.168.246.23</div><div class="m" style="left:666.5px">192.168.246.1</div><div class="m" style="left:891.5px">TCP</div><div class="m" style="right:1249px;text-align:right">66</div><div class="m" style="left:1248.5px">40380 <span style="position:relative;top:-2px">→</span> 80 [ACK] Seq=223 Ack=930 Win=64128 Len=0 TSval=2287348157 TSecr=744485343</div></div>
<div class="row" style="top:812.8px;background:#e4ffc7;color:#12272e"><div class="m" style="right:2398px;text-align:right">27</div><div class="m" style="left:100.5px">1.200598349</div><div class="m" style="left:441.5px">192.168.246.23</div><div class="m" style="left:666.5px">192.168.246.1</div><div class="m" style="left:891.5px">TCP</div><div class="m" style="right:1249px;text-align:right">74</div><div class="m" style="left:1248.5px">40382 <span style="position:relative;top:-2px">→</span> 80 [SYN] Seq=0 Win=64240 Len=0 MSS=1460 SACK_PERM TSval=2287348157 TSecr=0 WS=128</div></div>
<div class="row" style="top:836.8px;background:#e4ffc7;color:#12272e"><div class="m" style="right:2398px;text-align:right">28</div><div class="m" style="left:100.5px">1.201459221</div><div class="m" style="left:441.5px">192.168.246.1</div><div class="m" style="left:666.5px">192.168.246.23</div><div class="m" style="left:891.5px">TCP</div><div class="m" style="right:1249px;text-align:right">78</div><div class="m" style="left:1248.5px">80 <span style="position:relative;top:-2px">→</span> 40382 [SYN, ACK] Seq=0 Ack=1 Win=65535 Len=0 MSS=1460 WS=64 TSval=744485344 TSecr=2287348157 SACK_PERM</div></div>
<div class="row" style="top:860.8px;background:#e4ffc7;color:#12272e"><div class="m" style="right:2398px;text-align:right">29</div><div class="m" style="left:100.5px">1.201483013</div><div class="m" style="left:441.5px">192.168.246.23</div><div class="m" style="left:666.5px">192.168.246.1</div><div class="m" style="left:891.5px">TCP</div><div class="m" style="right:1249px;text-align:right">66</div><div class="m" style="left:1248.5px">40382 <span style="position:relative;top:-2px">→</span> 80 [ACK] Seq=1 Ack=1 Win=64256 Len=0 TSval=2287348158 TSecr=744485344</div></div>
<div class="row" style="top:884.8px;background:#e4ffc7;color:#12272e"><div class="m" style="right:2398px;text-align:right">30</div><div class="m" style="left:100.5px">1.201540617</div><div class="m" style="left:441.5px">192.168.246.23</div><div class="m" style="left:666.5px">192.168.246.1</div><div class="m" style="left:891.5px">HTTP</div><div class="m" style="right:1249px;text-align:right">287</div><div class="m" style="left:1248.5px">GET /ctf/Less-5/?id=1&#x27;%20and%20ascii(substr((select%20flag%20from%20t),1,1))=35--+ HTTP/1.1</div></div>
<div class="row" style="top:908.8px;background:#e4ffc7;color:#12272e"><div class="m" style="right:2398px;text-align:right">31</div><div class="m" style="left:100.5px">1.202700827</div><div class="m" style="left:441.5px">192.168.246.1</div><div class="m" style="left:666.5px">192.168.246.23</div><div class="m" style="left:891.5px">TCP</div><div class="m" style="right:1249px;text-align:right">66</div><div class="m" style="left:1248.5px">[TCP Window Update] 80 <span style="position:relative;top:-2px">→</span> 40382 [ACK] Seq=1 Ack=1 Win=131712 Len=0 TSval=744485344 TSecr=2287348158</div></div>
<div class="row" style="top:932.8px;background:#e4ffc7;color:#12272e"><div class="m" style="right:2398px;text-align:right">32</div><div class="m" style="left:100.5px">1.202766595</div><div class="m" style="left:441.5px">192.168.246.1</div><div class="m" style="left:666.5px">192.168.246.23</div><div class="m" style="left:891.5px">TCP</div><div class="m" style="right:1249px;text-align:right">66</div><div class="m" style="left:1248.5px">80 <span style="position:relative;top:-2px">→</span> 40382 [ACK] Seq=1 Ack=222 Win=131520 Len=0 TSval=744485344 TSecr=2287348158</div></div>
<div class="row" style="top:956.8px;background:#e4ffc7;color:#12272e"><div class="m" style="right:2398px;text-align:right">33</div><div class="m" style="left:100.5px">1.203909280</div><div class="m" style="left:441.5px">192.168.246.1</div><div class="m" style="left:666.5px">192.168.246.23</div><div class="m" style="left:891.5px">HTTP</div><div class="m" style="right:1249px;text-align:right">994</div><div class="m" style="left:1248.5px">HTTP/1.1 200 OK  (text/html)</div></div>
<div class="row" style="top:980.8px;background:#e4ffc7;color:#12272e"><div class="m" style="right:2398px;text-align:right">34</div><div class="m" style="left:100.5px">1.203919717</div><div class="m" style="left:441.5px">192.168.246.23</div><div class="m" style="left:666.5px">192.168.246.1</div><div class="m" style="left:891.5px">TCP</div><div class="m" style="right:1249px;text-align:right">66</div><div class="m" style="left:1248.5px">40382 <span style="position:relative;top:-2px">→</span> 80 [ACK] Seq=222 Ack=929 Win=64128 Len=0 TSval=2287348161 TSecr=744485347</div></div>
<div class="row" style="top:1004.8px;background:#e4ffc7;color:#12272e"><div class="m" style="right:2398px;text-align:right">35</div><div class="m" style="left:100.5px">1.204522060</div><div class="m" style="left:441.5px">192.168.246.23</div><div class="m" style="left:666.5px">192.168.246.1</div><div class="m" style="left:891.5px">TCP</div><div class="m" style="right:1249px;text-align:right">66</div><div class="m" style="left:1248.5px">40382 <span style="position:relative;top:-2px">→</span> 80 [FIN, ACK] Seq=222 Ack=929 Win=64128 Len=0 TSval=2287348161 TSecr=744485347</div></div>
<div class="a" style="left:1620px;top:1030px;width:1.5px;height:2px;background:#5a6a60"></div>
<div class="a" style="left:14px;top:201px;width:11px;height:1px;background:#b8a8a8"></div>
<div class="a" style="left:14px;top:201px;width:1px;height:36px;background:#c89090"></div>
<div class="a" style="left:14px;top:237px;width:1px;height:800px;background:repeating-linear-gradient(#3a4a50 0 6px,transparent 6px 8px)"></div>
<div class="a" style="left:33px;top:189px;width:64px;height:24px;border:1px solid rgba(255,255,255,0.06)"></div>
</div></div>
<div class="rb" style="left:1233px;top:284px;width:997px;height:58px"></div>
<div class="rb" style="left:1249px;top:588px;width:1000px;height:43px"></div>
<div class="rb" style="left:1226px;top:861px;width:1031px;height:60px"></div>
<div class="a" style="left:2492px;top:157px;width:1px;height:875px;background:#6a6a6a"></div>
<div class="a" style="left:2493px;top:157px;width:45px;height:875px;background:#e4ffc7"></div>
<div class="a" style="left:2493px;top:157px;width:45px;height:1.5px;background:#0062b5"></div>
<div class="a" style="left:2538px;top:157px;width:22px;height:875px;background:#424242"></div>
<div class="a" style="left:2538px;top:157px;width:20px;height:18px;background:#484848;border:1px solid #5a5a5a"></div>
<svg class="a" style="left:2543px;top:163px" width="12" height="6" viewBox="0 0 12 6"><path d="M0 6 L6 0 L12 6z" fill="#c0c0c0"/></svg>
<div class="a" style="left:2538px;top:177px;width:20px;height:39px;background:#474747;border:1px solid #595959"></div>
<div class="a" style="left:2538px;top:1011px;width:20px;height:20px;background:#484848;border:1px solid #5a5a5a"></div>
<svg class="a" style="left:2543px;top:1018px" width="12" height="6" viewBox="0 0 12 6"><path d="M0 0 L6 6 L12 0z" fill="#c0c0c0"/></svg>
<div class="a" style="left:2558px;top:157px;width:2px;height:875px;background:#1f1f1f"></div>
<div class="a" style="left:0;top:1032px;width:2492px;height:20px;background:#454545;border-bottom:1px solid #6a6a6a"></div>
<div class="a" style="left:2px;top:1032px;width:19px;height:20px;background:#474747;border:1px solid #5a5a5a"></div>
<svg class="a" style="left:7px;top:1037px" width="6" height="10" viewBox="0 0 6 10"><path d="M6 0 L0 5 L6 10z" fill="#c0c0c0"/></svg>
<div class="a" style="left:21px;top:1032px;width:2063px;height:20px;background:linear-gradient(#555,#4a4a4a);border:1px solid #5c5c5c;border-left:1px solid #222"></div>
<div class="a" style="left:2471px;top:1032px;width:21px;height:20px;background:#474747;border:1px solid #5a5a5a"></div>
<svg class="a" style="left:2478px;top:1037px" width="6" height="10" viewBox="0 0 6 10"><path d="M0 0 L6 5 L0 10z" fill="#c0c0c0"/></svg>
<div class="a" style="left:2492px;top:1032px;width:68px;height:20px;background:#1f1f1f"></div>
<div class="a" style="left:0;top:1052px;width:2560px;height:9px;background:#1e1e1e"></div>
<div class="a" style="left:1271px;top:1056px;width:3px;height:3px;background:#7a7a7a"></div>
<div class="a" style="left:1275.5px;top:1056px;width:3px;height:3px;background:#7a7a7a"></div>
<div class="a" style="left:1280px;top:1056px;width:3px;height:3px;background:#7a7a7a"></div>
<div class="a" style="left:1284.5px;top:1056px;width:3px;height:3px;background:#7a7a7a"></div>
<div class="a" style="left:1289px;top:1056px;width:3px;height:3px;background:#7a7a7a"></div>
<div class="a" style="left:1293.5px;top:1056px;width:3px;height:3px;background:#7a7a7a"></div>
<div class="a" style="left:0;top:1061px;width:1433px;height:445px;background:#2b2b2b;border-left:2px solid #1a1a1a;border-top:1px solid #181818"></div>
<div class="a" style="left:32px;top:1062px;width:1401px;height:96px;background:#1e1e1e"></div>
<svg class="a" style="left:14px;top:1068px" width="7" height="12" viewBox="0 0 7 12"><path d="M0 0 L6.5 6 L0 12z" fill="#a8a8a8"/></svg>
<div class="a m" style="left:36.5px;top:1062px;color:#fff">Frame 1: 66 bytes on wire (528 bits), 66 bytes captured (528 bits) on interface ens33, id 0</div>
<svg class="a" style="left:14px;top:1092px" width="7" height="12" viewBox="0 0 7 12"><path d="M0 0 L6.5 6 L0 12z" fill="#a8a8a8"/></svg>
<div class="a m" style="left:36.5px;top:1086px;color:#fff">Ethernet II, Src: VMware_1b:d2:18 (00:0c:29:1b:d2:18), Dst: 3a:f9:d3:4c:bf:64 (3a:f9:d3:4c:bf:64)</div>
<svg class="a" style="left:14px;top:1116px" width="7" height="12" viewBox="0 0 7 12"><path d="M0 0 L6.5 6 L0 12z" fill="#a8a8a8"/></svg>
<div class="a m" style="left:36.5px;top:1110px;color:#fff">Internet Protocol Version 4, Src: 192.168.246.23, Dst: 18.65.148.114</div>
<svg class="a" style="left:14px;top:1140px" width="7" height="12" viewBox="0 0 7 12"><path d="M0 0 L6.5 6 L0 12z" fill="#a8a8a8"/></svg>
<div class="a m" style="left:36.5px;top:1134px;color:#fff">Transmission Control Protocol, Src Port: 57544, Dst Port: 443, Seq: 1, Ack: 1, Len: 0</div>
<div class="a" style="left:1433px;top:1061px;width:7px;height:445px;background:#1f1f1f"></div>
<div class="a" style="left:1440px;top:1061px;width:1px;height:445px;background:#181818"></div>
<div class="a" style="left:1437px;top:1273px;width:3px;height:3px;background:#7a7a7a"></div>
<div class="a" style="left:1437px;top:1278px;width:3px;height:3px;background:#7a7a7a"></div>
<div class="a" style="left:1437px;top:1282px;width:3px;height:3px;background:#7a7a7a"></div>
<div class="a" style="left:1437px;top:1287px;width:3px;height:3px;background:#7a7a7a"></div>
<div class="a" style="left:1437px;top:1291px;width:3px;height:3px;background:#7a7a7a"></div>
<div class="a" style="left:1437px;top:1296px;width:3px;height:3px;background:#7a7a7a"></div>
<div class="a" style="left:1441px;top:1061px;width:65px;height:445px;background:#1e1e1e"></div>
<div class="a" style="left:1506px;top:1062px;width:1053px;height:444px;background:#2b2b2b"></div>
<div class="a" style="left:2559px;top:1061px;width:1px;height:445px;background:#1a1a1a"></div>
<div class="a m" style="left:1451.5px;top:1062.0px;color:#808080">0000</div>
<div class="a m" style="left:1516px;top:1062.0px;color:#fff">3a f9 d3 4c bf 64 00 0c  29 1b d2 18 08 00 45 00</div>
<div class="a m" style="left:2062.5px;top:1062.0px;color:#fff">:<span style="color:#8a8a8a;font-weight:bold">·</span><span style="color:#8a8a8a;font-weight:bold">·</span>L<span style="color:#8a8a8a;font-weight:bold">·</span>d<span style="color:#8a8a8a;font-weight:bold">·</span><span style="color:#8a8a8a;font-weight:bold">·</span> )<span style="color:#8a8a8a;font-weight:bold">·</span><span style="color:#8a8a8a;font-weight:bold">·</span><span style="color:#8a8a8a;font-weight:bold">·</span><span style="color:#8a8a8a;font-weight:bold">·</span><span style="color:#8a8a8a;font-weight:bold">·</span>E<span style="color:#8a8a8a;font-weight:bold">·</span></div>
<div class="a m" style="left:1451.5px;top:1084.5px;color:#808080">0010</div>
<div class="a m" style="left:1516px;top:1084.5px;color:#fff">00 34 e8 13 40 00 40 06  f5 3c c0 a8 f6 17 12 41</div>
<div class="a m" style="left:2062.5px;top:1084.5px;color:#fff"><span style="color:#8a8a8a;font-weight:bold">·</span>4<span style="color:#8a8a8a;font-weight:bold">·</span><span style="color:#8a8a8a;font-weight:bold">·</span>@<span style="color:#8a8a8a;font-weight:bold">·</span>@<span style="color:#8a8a8a;font-weight:bold">·</span> <span style="color:#8a8a8a;font-weight:bold">·</span>&lt;<span style="color:#8a8a8a;font-weight:bold">·</span><span style="color:#8a8a8a;font-weight:bold">·</span><span style="color:#8a8a8a;font-weight:bold">·</span><span style="color:#8a8a8a;font-weight:bold">·</span><span style="color:#8a8a8a;font-weight:bold">·</span>A</div>
<div class="a m" style="left:1451.5px;top:1107.0px;color:#808080">0020</div>
<div class="a m" style="left:1516px;top:1107.0px;color:#fff">94 72 e0 c8 01 bb fb b7  35 ec ee 34 b2 f0 80 10</div>
<div class="a m" style="left:2062.5px;top:1107.0px;color:#fff"><span style="color:#8a8a8a;font-weight:bold">·</span>r<span style="color:#8a8a8a;font-weight:bold">·</span><span style="color:#8a8a8a;font-weight:bold">·</span><span style="color:#8a8a8a;font-weight:bold">·</span><span style="color:#8a8a8a;font-weight:bold">·</span><span style="color:#8a8a8a;font-weight:bold">·</span><span style="color:#8a8a8a;font-weight:bold">·</span> 5<span style="color:#8a8a8a;font-weight:bold">·</span><span style="color:#8a8a8a;font-weight:bold">·</span>4<span style="color:#8a8a8a;font-weight:bold">·</span><span style="color:#8a8a8a;font-weight:bold">·</span><span style="color:#8a8a8a;font-weight:bold">·</span><span style="color:#8a8a8a;font-weight:bold">·</span></div>
<div class="a m" style="left:1451.5px;top:1129.5px;color:#808080">0030</div>
<div class="a m" style="left:1516px;top:1129.5px;color:#fff">01 f5 5d 9a 00 00 01 01  08 0a 8e 9d 6a 29 11 f0</div>
<div class="a m" style="left:2062.5px;top:1129.5px;color:#fff"><span style="color:#8a8a8a;font-weight:bold">·</span><span style="color:#8a8a8a;font-weight:bold">·</span>]<span style="color:#8a8a8a;font-weight:bold">·</span><span style="color:#8a8a8a;font-weight:bold">·</span><span style="color:#8a8a8a;font-weight:bold">·</span><span style="color:#8a8a8a;font-weight:bold">·</span><span style="color:#8a8a8a;font-weight:bold">·</span> <span style="color:#8a8a8a;font-weight:bold">·</span><span style="color:#8a8a8a;font-weight:bold">·</span><span style="color:#8a8a8a;font-weight:bold">·</span><span style="color:#8a8a8a;font-weight:bold">·</span>j)<span style="color:#8a8a8a;font-weight:bold">·</span><span style="color:#8a8a8a;font-weight:bold">·</span></div>
<div class="a m" style="left:1451.5px;top:1152.0px;color:#808080">0040</div>
<div class="a m" style="left:1516px;top:1152.0px;color:#fff">d0 33</div>
<div class="a m" style="left:2062.5px;top:1152.0px;color:#fff"><span style="color:#8a8a8a;font-weight:bold">·</span>3</div>
<div class="a" style="left:2336px;top:1216px;width:128px;height:69px;background:#232323;border:1px solid #383838;border-radius:4px"></div>
<svg class="a" style="left:2349px;top:1228px" width="12" height="14" viewBox="0 0 12 14"><path d="M6 13.5 V1.5 M1 6.5 L6 1.5 L11 6.5" stroke="#f0a020" stroke-width="2" fill="none"/></svg>
<svg class="a" style="left:2349px;top:1254.5px" width="12" height="14" viewBox="0 0 12 14"><path d="M6 0.5 V12.5 M1 7.5 L6 12.5 L11 7.5" stroke="#6ab820" stroke-width="2" fill="none"/></svg>
<div class="a s" style="left:2367px;top:1224px;font-size:18.8px;line-height:24px;color:#f0a020">2.1 KB/s</div>
<div class="a s" style="left:2367px;top:1250.5px;font-size:18.8px;line-height:24px;color:#6ab820">1.3 KB/s</div>
<div class="a" style="left:0;top:1506px;width:2560px;height:34px;background:#1c1c1c"></div>
<div class="a" style="left:15.5px;top:1513.5px;width:20px;height:20px;border-radius:50%;background:radial-gradient(circle at 40% 35%,#f4f0a0,#d8d050)"></div>
<svg class="a" style="left:49px;top:1513px" width="22" height="21" viewBox="0 0 22 21"><path d="M1 3 h11 l3 3 v14 h-14z" fill="#e8e8e8" stroke="#c0c0c0" stroke-width="1"/><path d="M1 3 h11 v3 h-11z" fill="#3aa0e0"/><rect x="3" y="9" width="9" height="1" fill="#b0b0b0"/><rect x="3" y="12" width="9" height="1" fill="#b0b0b0"/><rect x="3" y="15" width="9" height="1" fill="#b0b0b0"/><path d="M6 15 L17 3 L20 6 L9 18 L5 19z" fill="#404040" stroke="#202020" stroke-width="0.8"/></svg>
<div class="a s" style="left:94px;top:1511px;font-size:19.6px;line-height:24px;color:#fff">timu.pcapng</div>
<div class="a" style="left:1812px;top:1510px;width:1px;height:28px;background:#2a2a2a"></div>
<div class="a" style="left:1817px;top:1510px;width:1px;height:28px;background:#2a2a2a"></div>
<div class="a" style="left:2416px;top:1510px;width:1px;height:28px;background:#2a2a2a"></div>
<div class="a" style="left:2420px;top:1510px;width:1px;height:28px;background:#2a2a2a"></div>
<div class="a s" style="left:1834px;top:1512px;font-size:18px;line-height:24px;color:#fff">分组: 25331</div>
<div class="a s" style="left:2437px;top:1511.5px;font-size:18.5px;line-height:24px;color:#fff">配置:<span style="margin-left:10px">Default</span></div>
</body></html>
